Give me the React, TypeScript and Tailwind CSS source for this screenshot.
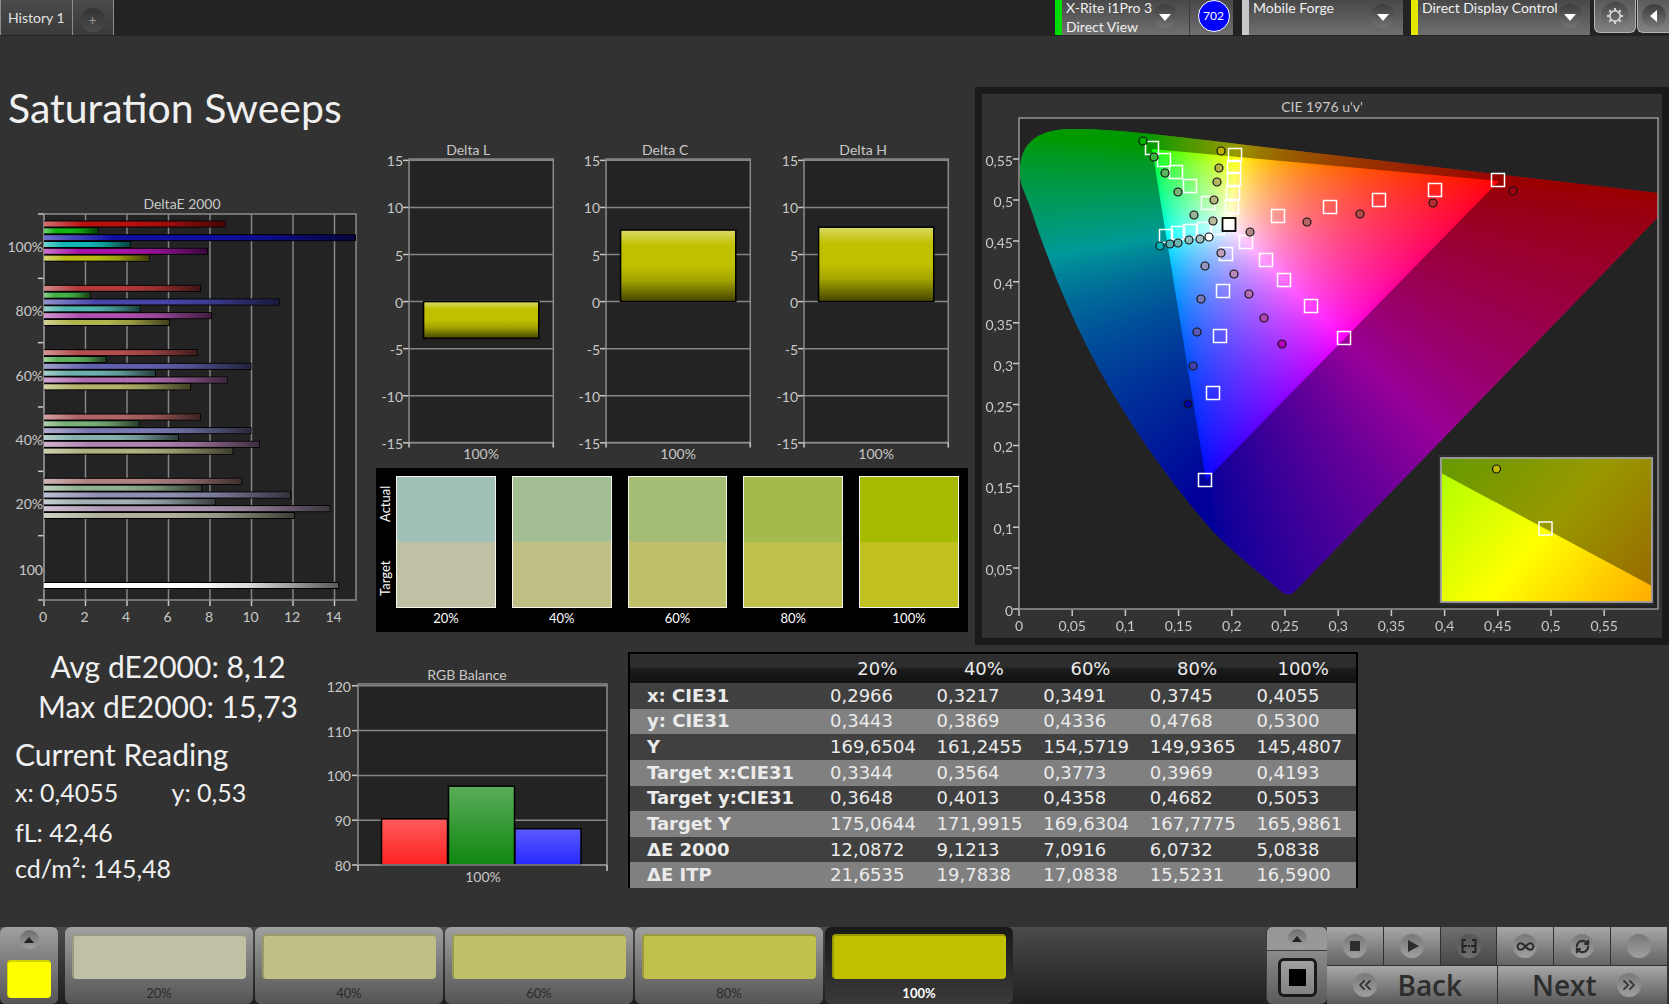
import { useEffect, useRef, useState } from 'react'
import type { ReactNode } from 'react'
import {
  ChevronsLeft,
  ChevronsRight,
  Infinity as InfinityIcon,
  RefreshCw
} from 'lucide-react'
import clsx from 'clsx'

const LEVELS = ['20%', '40%', '60%', '80%', '100%']

// DeltaE 2000 per saturation level: red, green, blue, cyan, magenta, yellow
const DELTA_E = [
  {
    label: '100%',
    values: [8.75, 2.63, 15.73, 4.2, 7.9, 5.08],
    colors: ['#b80f0f', '#12b412', '#0f0fa6', '#12b6b4', '#a814a8', '#b9b912']
  },
  {
    label: '80%',
    values: [7.57, 2.25, 11.36, 4.65, 8.1, 6.07],
    colors: ['#b43a3a', '#45b045', '#4646a8', '#52b4b0', '#ae50ae', '#b4b44e']
  },
  {
    label: '60%',
    values: [7.4, 3.03, 10, 5.4, 8.85, 7.09],
    colors: ['#b44e4e', '#5cb05c', '#6060ac', '#6cb0ae', '#b06cb0', '#b2b268']
  },
  {
    label: '40%',
    values: [7.57, 4.6, 10, 6.5, 10.4, 9.12],
    colors: ['#b06464', '#78b078', '#7878b0', '#86b0ae', '#b082b0', '#b0b080']
  },
  {
    label: '20%',
    values: [9.55, 7.6, 11.9, 8.27, 13.8, 12.09],
    colors: ['#b08282', '#92b092', '#9090b4', '#a0b0b4', '#b098b4', '#b0b09c']
  }
]

const DELTA_CHARTS = [
  { title: 'Delta L', value: -3.9 },
  { title: 'Delta C', value: 7.6 },
  { title: 'Delta H', value: 7.9 }
]

const SWATCHES = [
  { label: '20%', actual: 'bg-[#a1c1b8]', target: 'bg-[#c0c0a5]' },
  { label: '40%', actual: 'bg-[#a3be95]', target: 'bg-[#c0c086]' },
  { label: '60%', actual: 'bg-[#a4bc74]', target: 'bg-[#c0c06b]' },
  { label: '80%', actual: 'bg-[#a4ba4d]', target: 'bg-[#c0c04d]' },
  { label: '100%', actual: 'bg-[#a6ba00]', target: 'bg-[#c0c021]' }
]

const PATCHES = [
  { label: '20%', color: 'bg-[#c0c0a5]' },
  { label: '40%', color: 'bg-[#c0c086]' },
  { label: '60%', color: 'bg-[#c0c06b]' },
  { label: '80%', color: 'bg-[#c0c04d]' },
  { label: '100%', color: 'bg-[#c0c000]' }
]

const TABLE_ROWS = [
  { label: 'x: CIE31', values: ['0,2966', '0,3217', '0,3491', '0,3745', '0,4055'] },
  { label: 'y: CIE31', values: ['0,3443', '0,3869', '0,4336', '0,4768', '0,5300'] },
  { label: 'Y', values: ['169,6504', '161,2455', '154,5719', '149,9365', '145,4807'] },
  { label: 'Target x:CIE31', values: ['0,3344', '0,3564', '0,3773', '0,3969', '0,4193'] },
  { label: 'Target y:CIE31', values: ['0,3648', '0,4013', '0,4358', '0,4682', '0,5053'] },
  { label: 'Target Y', values: ['175,0644', '171,9915', '169,6304', '167,7775', '165,9861'] },
  { label: 'ΔE 2000', values: ['12,0872', '9,1213', '7,0916', '6,0732', '5,0838'] },
  { label: 'ΔE ITP', values: ['21,6535', '19,7838', '17,0838', '15,5231', '16,5900'] }
]

// positions inside the CIE chart
const TARGETS = [
  [170, 54], [182, 66], [194, 78], [208, 92], [226, 109],
  [253, 61], [252, 73], [252, 85], [251, 99], [250, 113],
  [516, 86], [453, 96], [397, 106], [348, 113], [296, 122],
  [184, 142], [196, 139], [208, 137], [222, 135], [236, 134],
  [264, 148], [284, 166], [302, 186], [329, 212], [362, 244],
  [244, 160], [241, 197], [238, 242], [231, 299], [223, 386]
]

const READINGS: [number, number, string][] = [
  [161, 47, '#00b400'], [172, 63, '#3cb43c'], [183, 79, '#5ab45a'], [196, 98, '#78b478'], [212, 121, '#96b496'],
  [239, 57, '#b9b400'], [237, 74, '#b4b446'], [235, 88, '#b4b464'], [232, 106, '#b4b482'], [231, 127, '#b9b99b'],
  [531, 97, '#a00010'], [451, 109, '#b42d2d'], [378, 120, '#b44b4b'], [325, 128, '#b46464'], [268, 138, '#b48787'],
  [178, 152, '#00b4b4'], [188, 150, '#50b4b4'], [196, 149, '#6eb4b4'], [207, 146, '#8cb9b9'], [218, 145, '#a0bebe'],
  [227, 143, '#ffffff'],
  [223, 172, '#9696be'], [219, 205, '#7878b9'], [215, 238, '#5a5ab4'], [211, 272, '#4141aa'], [206, 310, '#0000a0'],
  [239, 159, '#bea0be'], [252, 180, '#b987b9'], [267, 200, '#b46eb4'], [282, 224, '#b446b4'], [300, 250, '#b400b4']
]

const LOCUS =
  'M1 55 C1 30 12 11 54 11 C100 11 160 19 227 27 L639 75 V99 L275 474 Q270 479 263 474 ' +
  'C245 458 215 436 192 411 C165 380 130 335 98 282 C70 236 45 185 18 109 C8 75 1 70 1 55 Z'
const GAMUT = 'M480 63 L133 31 L187 362 Z'

function BarShades() {
  return (
    <defs>
      <linearGradient id="shade-x">
        <stop offset="0" stopColor="#fff" stopOpacity="0.4" />
        <stop offset="0.22" stopColor="#fff" stopOpacity="0" />
        <stop offset="0.5" stopColor="#000" stopOpacity="0" />
        <stop offset="0.7" stopColor="#000" stopOpacity="0.15" />
        <stop offset="1" stopColor="#000" stopOpacity="0.65" />
      </linearGradient>
      <linearGradient id="shade-y" x2="0" y2="1">
        <stop offset="0" stopColor="#fff" stopOpacity="0.4" />
        <stop offset="0.22" stopColor="#fff" stopOpacity="0" />
        <stop offset="0.5" stopColor="#000" stopOpacity="0" />
        <stop offset="0.7" stopColor="#000" stopOpacity="0.15" />
        <stop offset="1" stopColor="#000" stopOpacity="0.65" />
      </linearGradient>
    </defs>
  )
}

function DeltaEChart() {
  const left = 44
  const top = 24
  const right = 356
  const bottom = 410
  const band = (bottom - top) / 6
  const slot = 6.83
  const x = (v: number) => left + v * 20.75

  return (
    <svg viewBox="0 0 376 442" className="block h-auto w-full fill-[#c8c8c8] text-[14px]">
      <BarShades />
      <text x="182" y="19" textAnchor="middle">DeltaE 2000</text>
      <rect x={left} y={top} width={right - left} height={bottom - top} fill="#232323" />
      {[0, 2, 4, 6, 8, 10, 12, 14].map((v) => (
        <g key={v}>
          <path d={`M${x(v)} ${top}V${bottom}`} stroke="#858585" strokeWidth="1.5" />
          <path d={`M${x(v)} ${bottom}v6`} stroke="#c8c8c8" strokeWidth="1.5" />
          <text x={x(v) - 1} y="432" textAnchor="middle">{v}</text>
        </g>
      ))}
      {[0, 1, 2, 3, 4, 5, 6].map((i) => (
        <path key={i} d={`M${left - 6} ${top + i * band}h6`} stroke="#c8c8c8" strokeWidth="1.5" />
      ))}
      <rect x={left} y={top} width={right - left} height={bottom - top} fill="none" stroke="#8c8c8c" strokeWidth="1.5" />
      {DELTA_E.map((group, row) => (
        <g key={group.label}>
          <text x="43" y={top + row * band + 38} textAnchor="end">{group.label}</text>
          {group.values.map((value, i) => {
            const y = top + row * band + 6.5 + i * slot
            const width = Math.min(x(value), right) - left
            return (
              <g key={i}>
                <rect x={left} y={y} width={width} height="7" fill="#000" />
                <rect x={left} y={y + 1} width={width - 1} height="5" fill={group.colors[i]} />
                <rect x={left} y={y + 1} width={width - 1} height="5" fill="url(#shade-x)" />
              </g>
            )
          })}
        </g>
      ))}
      <text x="43" y={top + 5 * band + 39} textAnchor="end">100</text>
      <rect x={left} y="392" width={x(14.2) - left} height="7" fill="#000" />
      <rect x={left} y="393" width={x(14.2) - left - 1} height="5" fill="#fff" />
      <rect x={left} y="393" width={x(14.2) - left - 1} height="5" fill="url(#shade-x)" />
    </svg>
  )
}

function DeltaChart({ title, value }: { title: string; value: number }) {
  const y = (v: number) => 172.3 - v * 9.4
  const barTop = Math.min(y(value), y(0))
  const barHeight = Math.abs(y(value) - y(0))

  return (
    <svg viewBox="0 0 197 338" className="block h-auto w-full fill-[#c8c8c8] text-[14px]">
      <text x="92" y="26" textAnchor="middle">{title}</text>
      <rect x="33" y="30" width="144" height="283" fill="#232323" />
      {[15, 10, 5, 0, -5, -10, -15].map((v) => (
        <g key={v}>
          <path d={`M33 ${y(v)}h144`} stroke="#858585" strokeWidth="1.5" />
          <path d={`M27 ${y(v)}h6`} stroke="#c8c8c8" strokeWidth="1.5" />
          <text x="27" y={y(v) + 6} textAnchor="end">{v}</text>
        </g>
      ))}
      <rect x="33" y="30" width="144" height="283" fill="none" stroke="#8c8c8c" strokeWidth="1.5" />
      <path d="M33 313v5M177 313v5" stroke="#c8c8c8" strokeWidth="1.5" />
      <rect x="47.5" y={barTop} width="115" height={barHeight} fill="#c0c000" />
      <rect x="47.5" y={barTop} width="115" height={barHeight} fill="url(#shade-y)" stroke="#000" strokeWidth="1.5" />
      <text x="105" y="329" textAnchor="middle">100%</text>
    </svg>
  )
}

function RgbChart() {
  const y = (v: number) => 200 - (v - 80) * 4.48
  const bars = [
    { x: 69.5, value: 90.3, from: '#ff5a5a', to: '#ff2323' },
    { x: 136.5, value: 97.6, from: '#5aac5a', to: '#0f870f' },
    { x: 203, value: 88.1, from: '#5a5aff', to: '#2828ff' }
  ]

  return (
    <svg viewBox="0 0 316 226" className="block h-auto w-full fill-[#c8c8c8] text-[14px]">
      <defs>
        {bars.map((bar) => (
          <linearGradient key={bar.x} id={`rgb-${bar.value}`} x2="0" y2="1">
            <stop stopColor={bar.from} />
            <stop offset="1" stopColor={bar.to} />
          </linearGradient>
        ))}
      </defs>
      <text x="155" y="15" textAnchor="middle">RGB Balance</text>
      <rect x="46" y="19" width="249" height="181" fill="#232323" />
      {[120, 110, 100, 90, 80].map((v) => (
        <g key={v}>
          <path d={`M46 ${y(v)}h249`} stroke="#858585" strokeWidth="1.5" />
          <path d={`M40 ${y(v)}h6`} stroke="#c8c8c8" strokeWidth="1.5" />
          <text x="39" y={y(v) + 6} textAnchor="end">{v}</text>
        </g>
      ))}
      {bars.map((bar) => (
        <rect
          key={bar.x}
          x={bar.x}
          y={y(bar.value)}
          width="66"
          height={200 - y(bar.value)}
          fill={`url(#rgb-${bar.value})`}
          stroke="#000"
          strokeWidth="1.5"
        />
      ))}
      <rect x="46" y="19" width="249" height="181" fill="none" stroke="#8c8c8c" strokeWidth="1.5" />
      <path d="M46 200v6M295 200v6" stroke="#c8c8c8" strokeWidth="1.5" />
      <text x="171" y="217" textAnchor="middle">100%</text>
    </svg>
  )
}

// brightest displayable colour for a u'v' chromaticity
function chromaToRgb(u: number, v: number) {
  const d = 6 * u - 16 * v + 12
  const x = (9 * u) / d
  const y = (4 * v) / d
  const X = x / y
  const Z = (1 - x - y) / y
  const linear = [
    3.2406 * X - 1.5372 - 0.4986 * Z,
    -0.9689 * X + 1.8758 + 0.0415 * Z,
    0.0557 * X - 0.204 + 1.057 * Z
  ].map((c) => Math.max(0, c))
  const max = Math.max(...linear)
  return linear.map((c) => 255 * Math.pow(c / max, 0.7))
}

function ChromaField() {
  const ref = useRef<HTMLCanvasElement>(null)

  useEffect(() => {
    const ctx = ref.current?.getContext('2d')
    if (!ctx) return
    const image = ctx.createImageData(639, 491)
    for (let py = 0; py < 491; py++) {
      for (let px = 0; px < 639; px++) {
        const rgb = chromaToRgb((px + 0.5) / 1064.5, (491 - py - 0.5) / 818)
        image.data.set([rgb[0], rgb[1], rgb[2], 255], (py * 639 + px) * 4)
      }
    }
    ctx.putImageData(image, 0, 0)
    const outside = new Path2D(LOCUS)
    outside.addPath(new Path2D(GAMUT))
    ctx.fillStyle = 'rgba(0, 0, 0, 0.4)'
    ctx.fill(outside, 'evenodd')
    ctx.globalCompositeOperation = 'destination-in'
    ctx.fillStyle = '#000'
    ctx.fill(new Path2D(LOCUS))
  }, [])

  return <canvas ref={ref} width={639} height={491} className="block" />
}

function CieChart() {
  const ticks = ['0', '0,05', '0,1', '0,15', '0,2', '0,25', '0,3', '0,35', '0,4', '0,45', '0,5', '0,55']

  return (
    <svg viewBox="0 0 680 544" className="block h-auto w-full fill-[#c8c8c8] text-[14px]">
      <defs>
        <linearGradient id="inset" gradientUnits="userSpaceOnUse" x1="459" y1="364" x2="653" y2="530">
          <stop stopColor="#aaff00" />
          <stop offset="0.5" stopColor="#ffff00" />
          <stop offset="1" stopColor="#ffaa00" />
        </linearGradient>
      </defs>
      <text x="340" y="18" textAnchor="middle">CIE 1976 u'v'</text>
      <rect x="37" y="24" width="639" height="491" fill="#232323" />
      <foreignObject x="37" y="24" width="639" height="491">
        <ChromaField />
      </foreignObject>
      <rect x="37" y="24" width="639" height="491" fill="none" stroke="#969696" strokeWidth="1.5" />
      {ticks.map((tick, i) => (
        <g key={tick}>
          <path d={`M${37 + i * 53.2} 516v6M37 ${515 - i * 40.9}h-6`} stroke="#c8c8c8" strokeWidth="1.5" />
          <text x={37 + i * 53.2} y="537" textAnchor="middle">{tick}</text>
          <text x="31" y={522 - i * 40.9} textAnchor="end">{tick}</text>
        </g>
      ))}
      {TARGETS.map(([x, y], i) => (
        <rect key={i} x={x - 6.5} y={y - 6.5} width="13" height="13" fill="none" stroke="#fff" strokeWidth="1.5" />
      ))}
      <rect x="240.5" y="124" width="13" height="13" fill="#fff" fillOpacity="0.6" stroke="#000" strokeWidth="1.8" />
      {READINGS.map(([x, y, color], i) => (
        <circle key={i} cx={x} cy={y} r="4" fill={color} stroke="#141414" strokeWidth="1.2" />
      ))}
      <rect x="456" y="361" width="216" height="150" fill="#2d2d2d" />
      <rect x="459" y="364" width="211" height="144" fill="url(#inset)" />
      <path d="M459 364h211v128L459 379z" fill="#000" fillOpacity="0.4" />
      <rect x="459" y="364" width="211" height="144" fill="none" stroke="#a0a0a0" strokeWidth="1.8" />
      <rect x="557" y="428" width="13" height="13" fill="none" stroke="#fff" strokeWidth="1.5" />
      <circle cx="514.5" cy="375" r="4" fill="#b9b900" stroke="#141414" strokeWidth="1.2" />
    </svg>
  )
}

function Knob({ children, className }: { children?: ReactNode; className?: string }) {
  return (
    <span
      className={clsx(
        'flex shrink-0 items-center justify-center rounded-full bg-linear-to-b',
        className
      )}
    >
      {children}
    </span>
  )
}

function Device({ lines, stripe, className, children }: {
  lines: string[]
  stripe: string
  className?: string
  children?: ReactNode
}) {
  return (
    <div className={clsx('flex h-[35px] bg-linear-to-b from-[#484848] to-[#707070]', className)}>
      <span className={clsx('w-[7px] shrink-0', stripe)} />
      <div className="-mt-0.5 grow pl-1 text-[14px] leading-[19px] whitespace-nowrap text-[#f0f0f0]">
        {lines.map((line) => (
          <div key={line}>{line}</div>
        ))}
      </div>
      <button
        type="button"
        aria-label={`${lines[0]} menu`}
        className={clsx('flex items-center pb-1', children ? 'mr-3' : 'mr-2')}
      >
        <Knob className="size-6 from-[#3c3c3c] to-[#747474]">
          <svg viewBox="0 0 12 7" className="mt-1 h-[7px] w-3 fill-white">
            <path d="M0 0h12L6 7z" />
          </svg>
        </Knob>
      </button>
      {children}
    </div>
  )
}

function Header() {
  return (
    <header className="flex h-9 items-start bg-[#232323]">
      <button type="button" className="h-[35px] border-x border-[#8c8c8c] bg-linear-to-b from-[#4b4b4b] to-[#3a3a3a] px-[7px] text-[14px] text-[#e1e1e1]">
        History 1
      </button>
      <button type="button" aria-label="Add history" className="flex h-[35px] w-[41px] items-center justify-center border-r border-[#8c8c8c] bg-linear-to-b from-[#4b4b4b] to-[#3a3a3a]">
        <Knob className="mt-1 size-6 from-[#333] to-[#4b4b4b] text-[14px] text-[#969696]">+</Knob>
      </button>
      <div className="ml-auto flex items-start">
        <Device lines={['X-Rite i1Pro 3', 'Direct View']} stripe="bg-[#00dc00]" className="w-[178px]">
          <div className="flex w-11 shrink-0 items-start justify-center border-l border-[#3c3c3c] pl-1">
            <span className="flex h-8 w-8 items-center justify-center rounded-full border border-white bg-[#0000ff] text-[12px] text-white">
              702
            </span>
          </div>
        </Device>
        <Device lines={['Mobile Forge']} stripe="bg-[#c8c8c8]" className="ml-[9px] w-[161px]" />
        <Device lines={['Direct Display Control']} stripe="bg-[#e6e600]" className="ml-2 w-[179px]" />
        <button type="button" aria-label="Settings" className="ml-1 flex h-[33px] w-[42px] items-center justify-center rounded-b-md border border-t-0 border-[#b4b4b4] bg-linear-to-b from-[#5a5a5a] to-[#828282]">
          <Knob className="size-7 from-[#464646] to-[#828282]">
            <svg viewBox="0 0 20 20" className="size-[18px] fill-none stroke-[#d2d2d2]">
              <circle cx="10" cy="10" r="5.8" strokeWidth="2" />
              <path
                d="M10 1v3M10 16v3M1 10h3M16 10h3M3.6 3.6l2.2 2.2M14.2 14.2l2.2 2.2M3.6 16.4l2.2-2.2M14.2 5.8l2.2-2.2"
                strokeWidth="2.4"
              />
            </svg>
          </Knob>
        </button>
        <button type="button" aria-label="Collapse" className="ml-px flex h-[33px] w-8 items-center justify-center rounded-bl-md border border-t-0 border-r-0 border-[#b4b4b4] bg-linear-to-b from-[#5a5a5a] to-[#828282]">
          <Knob className="size-6 from-[#3c3c3c] to-[#787878]">
            <svg viewBox="0 0 7 12" className="h-3 w-[7px] fill-white">
              <path d="M7 0v12L0 6z" />
            </svg>
          </Knob>
        </button>
      </div>
    </header>
  )
}

function SwatchPanel() {
  return (
    <div className="flex h-[164px] bg-black pt-2 pr-[9px] text-white">
      <div className="flex h-[132px] w-5 shrink-0 flex-col items-center gap-4 text-[13px]">
        <span className="flex h-14 rotate-180 items-center justify-center [writing-mode:vertical-rl]">Actual</span>
        <span className="flex h-15 rotate-180 items-center justify-center [writing-mode:vertical-rl]">Target</span>
      </div>
      <div className="grid grow grid-cols-5 gap-4">
        {SWATCHES.map((swatch) => (
          <div key={swatch.label} className="text-center text-[13px] leading-5">
            <div className="flex h-[132px] flex-col border border-[#f5f5eb]">
              <div className={clsx('flex-1', swatch.actual)} />
              <div className={clsx('flex-1', swatch.target)} />
            </div>
            {swatch.label}
          </div>
        ))}
      </div>
    </div>
  )
}

function ReadingTable() {
  return (
    <table className="h-[236px] w-full table-fixed border-2 border-b-0 border-black font-['DejaVu_Sans',sans-serif] text-[18px] leading-5 text-[#ebebeb]">
      <thead>
        <tr className="h-[30px] bg-linear-to-b from-[#2d2d2d] from-45% via-[#1b1b1b] via-55% to-[#101010]">
          <th className="w-[195px]" aria-label="Measurement" />
          {LEVELS.map((level) => (
            <th key={level} className="font-normal">{level}</th>
          ))}
        </tr>
      </thead>
      <tbody>
        {TABLE_ROWS.map((row) => (
          <tr key={row.label} className="odd:bg-[#404040] even:bg-[#808080]">
            <th className="pl-[17px] text-left font-bold whitespace-nowrap">{row.label}</th>
            {row.values.map((value, i) => (
              <td key={i} className="pl-[6px] whitespace-nowrap">{value}</td>
            ))}
          </tr>
        ))}
      </tbody>
    </table>
  )
}

function TransportButton({ label, active, children }: { label: string; active?: boolean; children?: ReactNode }) {
  return (
    <button
      type="button"
      aria-label={label}
      className={clsx(
        'flex h-[38px] grow items-center justify-center bg-linear-to-b',
        active ? 'from-[#707070] to-[#484848]' : 'from-[#a8a8a8] to-[#646464]'
      )}
    >
      <Knob className={clsx('size-6', active ? 'from-[#545454] to-[#707070]' : 'from-[#787878] to-[#a0a0a0]')}>
        {children}
      </Knob>
    </button>
  )
}

function Footer() {
  const [selected, setSelected] = useState('100%')

  return (
    <footer className="flex h-[77px] bg-linear-to-b from-[#4b4b4b] to-[#202020]">
      <div className="mr-[7px] flex w-[58px] flex-col items-center rounded-md bg-linear-to-b from-[#a0a0a0] to-[#555]">
        <button type="button" aria-label="Expand patches" className="mt-[3px]">
          <Knob className="size-[19px] from-[#6e6e6e] to-[#a0a0a0]">
            <svg viewBox="0 0 12 7" className="h-[6px] w-3 fill-[#232323]">
              <path d="M0 7h12L6 0z" />
            </svg>
          </Knob>
        </button>
        <button type="button" aria-label="Current color" className="mt-[11px] h-[38px] w-11 rounded border-t-2 border-l border-[#d2d200] bg-[#ffff00]" />
      </div>
      <div className="flex gap-[2px]">
        {PATCHES.map((patch) => {
          const active = patch.label === selected
          return (
            <button
              key={patch.label}
              type="button"
              onClick={() => setSelected(patch.label)}
              className={clsx(
                'flex w-[188px] flex-col rounded-md bg-linear-to-b px-[7px] pt-[7px] text-[13px] leading-5',
                active ? 'from-[#191919] to-[#3a3a3a] font-bold text-white' : 'from-[#a0a0a0] to-[#555] text-[#2a2a2a]'
              )}
            >
              <span className={clsx('mb-1 block h-[45px] w-full rounded border-t-2 border-l-2 border-black/20 bg-clip-border', patch.color)} />
              <span className="w-full text-center">{patch.label}</span>
            </button>
          )
        })}
      </div>
      <div className="ml-auto flex w-[61px] flex-col overflow-hidden rounded-md border-l border-[#3c3c3c]">
        <button type="button" aria-label="Expand controls" className="flex h-[23px] items-center justify-center bg-[#989898]">
          <Knob className="size-[19px] from-[#6e6e6e] to-[#a0a0a0]">
            <svg viewBox="0 0 12 7" className="h-[6px] w-3 fill-[#232323]">
              <path d="M0 7h12L6 0z" />
            </svg>
          </Knob>
        </button>
        <button type="button" aria-label="Pattern window" className="mt-px flex grow items-center justify-center bg-linear-to-b from-[#8c8c8c] to-[#5a5a5a]">
          <span className="flex size-[39px] items-center justify-center rounded-md border-3 border-[#191919] bg-linear-to-b from-[#a0a0a0] to-[#828282]">
            <span className="size-[17px] bg-black" />
          </span>
        </button>
      </div>
      <div className="flex w-[342px] flex-col gap-px bg-[#323232] pr-0.5">
        <div className="grid grid-cols-6 gap-px text-[#2d2d2d]">
          <TransportButton label="Stop">
            <span className="size-[10px] bg-[#2d2d2d]" />
          </TransportButton>
          <TransportButton label="Play">
            <svg viewBox="0 0 11 12" className="ml-1 h-3 w-[11px] fill-[#2d2d2d]">
              <path d="M0 0l11 6-11 6z" />
            </svg>
          </TransportButton>
          <TransportButton label="Read series" active>
            <svg viewBox="0 0 16 14" className="h-[14px] w-4 fill-none stroke-[#232323]" strokeWidth="2">
              <path d="M5 1H1.500v12H5M11 1h3.500v12H11" />
              <path d="M2 7h12" strokeDasharray="4 1 2 1" />
            </svg>
          </TransportButton>
          <TransportButton label="Continuous">
            <InfinityIcon size={19} strokeWidth={2.5} />
          </TransportButton>
          <TransportButton label="Refresh">
            <RefreshCw size={15} strokeWidth={3.5} />
          </TransportButton>
          <TransportButton label="Record" />
        </div>
        <div className="grid grow grid-cols-2 gap-px font-['Open_Sans',sans-serif] text-[28px] leading-8 font-semibold text-[#2d2d2d]">
          <button type="button" className="flex items-center justify-center gap-5 bg-linear-to-b from-[#a8a8a8] to-[#5a5a5a] pr-2">
            <Knob className="size-6 from-[#787878] to-[#a0a0a0]">
              <ChevronsLeft size={20} strokeWidth={2} />
            </Knob>
            Back
          </button>
          <button type="button" className="flex items-center justify-center gap-5 bg-linear-to-b from-[#a8a8a8] to-[#5a5a5a] pl-2">
            Next
            <Knob className="size-6 from-[#787878] to-[#a0a0a0]">
              <ChevronsRight size={20} strokeWidth={2} />
            </Knob>
          </button>
        </div>
      </div>
    </footer>
  )
}

export default function App() {
  return (
    <div className="flex min-h-screen flex-col bg-[#323232] font-['Lato',sans-serif] text-[#f0f0f0]">
      <Header />
      <main className="grow">
        <div className="grid grid-cols-[376fr_592fr_701fr] items-start">
          <section className="pt-12">
            <h1 className="pl-2 text-[41px] leading-12 whitespace-nowrap">Saturation Sweeps</h1>
            <div className="pt-[58px]">
              <DeltaEChart />
            </div>
          </section>
          <section className="pt-[93px]">
            <div className="grid grid-cols-3">
              {DELTA_CHARTS.map((chart) => (
                <DeltaChart key={chart.title} title={chart.title} value={chart.value} />
              ))}
            </div>
            <SwatchPanel />
          </section>
          <section className="pt-[51px] pl-[7px]">
            <div className="border-7 border-[#1a1a1a]">
              <CieChart />
            </div>
          </section>
        </div>
        <div className="grid grid-cols-[312fr_316fr_730fr_311fr] items-start">
          <section className="pt-px whitespace-nowrap">
            <div className="pl-6 text-center text-[30px] leading-10">
              <p>Avg dE2000: 8,12</p>
              <p>Max dE2000: 15,73</p>
            </div>
            <h2 className="pt-2 pl-[15px] text-[30px] leading-10">Current Reading</h2>
            <div className="grid grid-cols-2 pl-[15px] text-[25px] leading-9">
              <span>x: 0,4055</span>
              <span className="pl-2">y: 0,53</span>
              <span className="col-span-2 pt-1">fL: 42,46</span>
              <span className="col-span-2">cd/m²: 145,48</span>
            </div>
          </section>
          <section className="pt-5">
            <RgbChart />
          </section>
          <section className="pt-[7px]">
            <ReadingTable />
          </section>
        </div>
      </main>
      <Footer />
    </div>
  )
}
